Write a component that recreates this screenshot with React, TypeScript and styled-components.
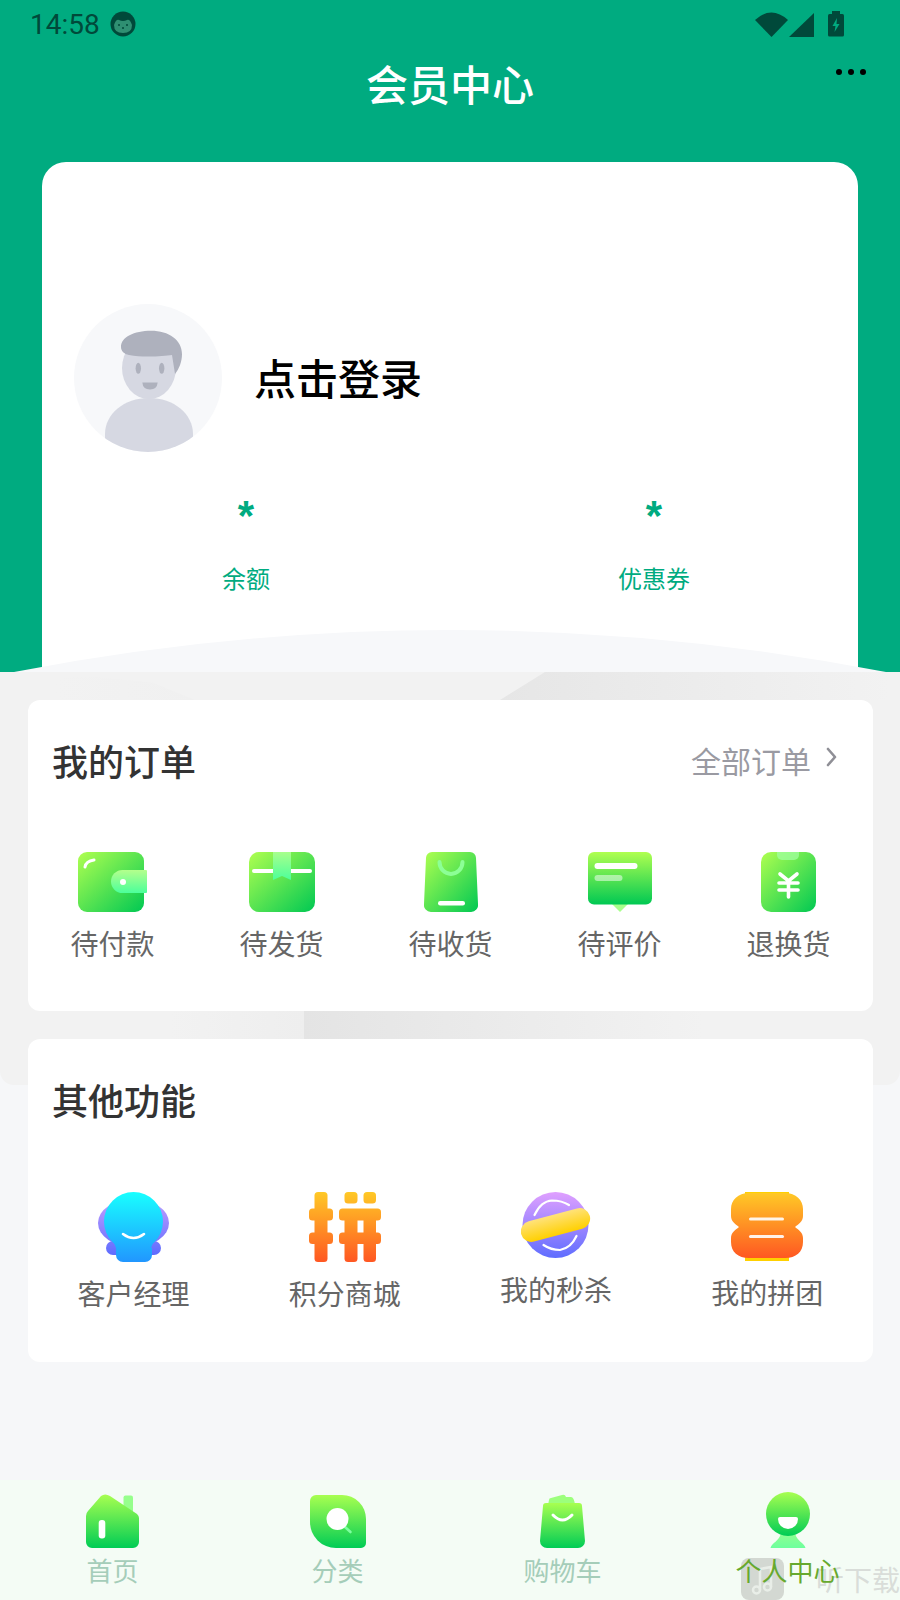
import * as React from 'react';
import styled, { createGlobalStyle } from 'styled-components';

const GlobalStyle = createGlobalStyle`
  html, body {
    margin: 0;
    padding: 0;
    background: #f6f7f9;
    font-family: "Noto Sans CJK SC", "Noto Sans", sans-serif;
  }
`;

const Page = styled.div`
  position: relative;
  width: 900px;
  height: 1600px;
  display: flex;
  flex-direction: column;
  overflow: hidden;
  background: #f6f7f9;
`;

const Header = styled.header`
  position: relative;
  height: 672px;
  flex: none;
  overflow: hidden;
  background: #00ab80;
`;

const StatusBar = styled.div`
  height: 48px;
  display: flex;
  align-items: center;
  padding: 0 56px 0 30px;
  color: #00493a;
  font-family: Roboto, sans-serif;
  font-size: 28px;
`;

const StatusTime = styled.span`
  margin-right: 10px;
`;

const StatusRight = styled.div`
  margin-left: auto;
  display: flex;
  align-items: center;
`;

const TitleRow = styled.div`
  height: 74px;
  display: grid;
  grid-template-columns: 1fr auto 1fr;
  align-items: center;
`;

const Title = styled.h1`
  grid-column: 2;
  margin: -4px 0 0;
  color: #fff;
  font-size: 42px;
  line-height: 74px;
  font-weight: 500;
`;

const MoreDots = styled.div`
  justify-self: end;
  align-self: start;
  margin: 21px 34px 0 0;
  display: flex;
  gap: 6px;
`;

const Dot = styled.span`
  width: 6px;
  height: 6px;
  border-radius: 50%;
  background: #000;
`;

const UserCard = styled.section`
  margin: 40px 42px 0;
  height: 600px;
  padding: 142px 32px 0;
  background: #fff;
  border-radius: 24px;
`;

const Profile = styled.div`
  display: flex;
  align-items: center;
  gap: 32px;
`;

const LoginText = styled.div`
  color: #000;
  font-size: 42px;
  font-weight: 500;
  line-height: 60px;
  margin-bottom: 2px;
`;

const Stats = styled.div`
  margin: 34px -32px 0;
  display: grid;
  grid-template-columns: 1fr 1fr;
`;

const Stat = styled.div`
  display: flex;
  flex-direction: column;
  align-items: center;
  color: #00ab80;
`;

const StatValue = styled.div`
  font-family: "Liberation Sans", sans-serif;
  font-size: 42px;
  font-weight: 700;
  line-height: 60px;
`;

const StatLabel = styled.div`
  margin-top: 15px;
  font-size: 24px;
  line-height: 34px;
`;

const Arc = styled.svg`
  position: absolute;
  left: 0;
  bottom: 0;
`;

const Main = styled.main`
  position: relative;
  flex: 1;
  padding: 28px 27px 0 28px;
  display: flex;
  flex-direction: column;
  gap: 28px;
`;

const Backdrop = styled.div`
  position: absolute;
  left: 0;
  right: 0;
  top: 0;
  height: 413px;
  background: #f2f2f2;
  border-radius: 0 0 14px 14px;
  overflow: hidden;
`;

const TopStreak = styled.div`
  position: absolute;
  left: 500px;
  top: 0;
  width: 390px;
  height: 28px;
  background: linear-gradient(90deg, #e6e6e6, #f2f2f2);
  clip-path: polygon(45px 0, 100% 0, 100% 100%, 0 100%);
`;

const TopShade = styled.div`
  position: absolute;
  left: 55px;
  top: 5px;
  width: 140px;
  height: 23px;
  background: linear-gradient(90deg, #f2f2f2, #f0f0f0);
  clip-path: polygon(0 0, 30% 0, 70% 25%, 100% 100%, 0 100%);
`;

const LowStreak = styled.div`
  position: absolute;
  left: 304px;
  top: 339px;
  width: 400px;
  height: 28px;
  background: linear-gradient(90deg, #e4e4e4, #f2f2f2);
`;

const LowShade = styled.div`
  position: absolute;
  left: 170px;
  top: 339px;
  width: 134px;
  height: 28px;
  background: linear-gradient(90deg, #f2f2f2, #eeeeee);
`;

const Card = styled.section<{ $height: number }>`
  position: relative;
  height: ${p => p.$height}px;
  background: #fff;
  border-radius: 12px;
`;

const CardHead = styled.div`
  height: 124px;
  padding: 0 36px 4px 24px;
  box-sizing: border-box;
  display: flex;
  align-items: center;
  justify-content: space-between;
`;

const CardTitle = styled.h2`
  margin: 0;
  color: #333;
  font-size: 36px;
  font-weight: 500;
`;

const AllOrders = styled.div`
  display: flex;
  align-items: center;
  gap: 15px;
  color: #9a9aa2;
  font-size: 30px;
  svg {
    margin-top: -6px;
  }
`;

const IconGrid = styled.div<{ $cols: number; $top: number }>`
  margin-top: ${p => p.$top}px;
  display: grid;
  grid-template-columns: repeat(${p => p.$cols}, 1fr);
  align-items: start;
`;

const GridItem = styled.div<{ $gap: number }>`
  display: flex;
  flex-direction: column;
  align-items: center;
  gap: ${p => p.$gap}px;
  svg {
    display: block;
  }
`;

const ItemLabel = styled.div`
  color: #666;
  font-size: 28px;
  line-height: 40px;
  white-space: nowrap;
`;

const BottomNav = styled.nav`
  height: 120px;
  flex: none;
  display: grid;
  grid-template-columns: repeat(4, 1fr);
  background: #f4fcf5;
`;

const NavItem = styled.div`
  display: flex;
  flex-direction: column;
  align-items: center;
  padding-top: 12px;
`;

const NavIcon = styled.div`
  height: 56px;
  display: flex;
  align-items: flex-end;
  margin-bottom: 4px;
`;

const NavLabel = styled.div<{ $active?: boolean }>`
  position: relative;
  z-index: 1;
  color: ${p => (p.$active ? '#67a92e' : '#a5cdb9')};
  font-size: 26px;
  line-height: 36px;
  white-space: nowrap;
`;

const Watermark = styled.div`
  position: absolute;
  left: 741px;
  bottom: 0;
  width: 170px;
  height: 42px;
  display: flex;
  align-items: center;
  gap: 32px;
  color: #d9ddd9;
  font-size: 28px;
  white-space: nowrap;
`;

const WatermarkBadge = styled.div`
  width: 43px;
  height: 42px;
  flex: none;
  display: flex;
  align-items: center;
  justify-content: center;
  background: #d3d8d2;
  border-radius: 8px;
`;

const Linear = ({ id, from, to, diag, user }: { id: string; from: string; to: string; diag?: boolean; user?: number }) =>
  user ? (
    <linearGradient id={id} gradientUnits="userSpaceOnUse" x1="0" y1="0" x2="0" y2={user}>
      <stop offset="0" stopColor={from} />
      <stop offset="1" stopColor={to} />
    </linearGradient>
  ) : (
    <linearGradient id={id} x1="0" y1="0" x2={diag ? 1 : 0} y2="1">
      <stop offset="0" stopColor={from} />
      <stop offset="1" stopColor={to} />
    </linearGradient>
  );

const GREEN_TOP = '#b0ff50';
const GREEN_END = '#00c853';

const WalletIcon = () => (
  <svg width="70" height="60" viewBox="0 0 70 60">
    <defs>
      <Linear id="wal" from={GREEN_TOP} to={GREEN_END} diag />
      <Linear id="walf" from="#b4ff8c" to="#4bff9b" />
    </defs>
    <rect width="66" height="60" rx="9" fill="url(#wal)" />
    <path d="M68 18H44.500a11.500 11.500 0 0 0 0 23H68a1 1 0 0 0 1-1V19a1 1 0 0 0-1-1Z" fill="url(#walf)" />
    <circle cx="45" cy="30" r="3" fill="#fff" />
    <path d="M7 15Q8 9 16 8" fill="none" stroke="#fff" strokeWidth="3" strokeLinecap="round" />
  </svg>
);

const BoxIcon = () => (
  <svg width="66" height="60" viewBox="0 0 66 60">
    <defs>
      <Linear id="box" from={GREEN_TOP} to={GREEN_END} diag />
      <Linear id="boxr" from="#a8ff8c" to="#4dff9a" />
    </defs>
    <rect width="66" height="60" rx="10" fill="url(#box)" />
    <rect x="3" y="17" width="60" height="4" rx="2" fill="#fff" />
    <path d="M24 0H42V28L33 24L24 28Z" fill="url(#boxr)" />
  </svg>
);

const BagIcon = () => (
  <svg width="54" height="60" viewBox="0 0 54 60">
    <defs>
      <Linear id="bag" from={GREEN_TOP} to={GREEN_END} diag />
    </defs>
    <path d="M8 0H46a6 6 0 0 1 6 6L54 52a7 7 0 0 1-7 8H7a7 7 0 0 1-7-8L2 6a6 6 0 0 1 6-6Z" fill="url(#bag)" />
    <path d="M15.500 10a11.500 12 0 0 0 23 0" fill="none" stroke="#8cff96" strokeWidth="4" strokeLinecap="round" />
    <rect x="14" y="49" width="27" height="4.500" rx="2.200" fill="#fff" />
  </svg>
);

const MessageIcon = () => (
  <svg width="64" height="60" viewBox="0 0 64 60">
    <defs>
      <Linear id="msg" from={GREEN_TOP} to={GREEN_END} />
    </defs>
    <path d="M24 52L32 60L40 52Z" fill="#a8ff8c" />
    <rect width="64" height="52.500" rx="6" fill="url(#msg)" />
    <rect x="6.500" y="11" width="43" height="6" rx="3" fill="#fff" />
    <rect x="6.500" y="23" width="28" height="6" rx="3" fill="#fff" opacity="0.5" />
  </svg>
);

const YenIcon = () => (
  <svg width="55" height="60" viewBox="0 0 55 60">
    <defs>
      <Linear id="yen" from={GREEN_TOP} to={GREEN_END} diag />
    </defs>
    <rect width="55" height="60" rx="10" fill="url(#yen)" />
    <path d="M16 0H38V3a5 5 0 0 1-5 5H21a5 5 0 0 1-5-5Z" fill="#a0ffa0" opacity="0.75" />
    <path d="M19 22L27.500 29L36 22M18 31H37M18 38H37M27.500 29V45" fill="none" stroke="#fff" strokeWidth="3.600" strokeLinecap="round" />
  </svg>
);

const ManagerIcon = () => (
  <svg width="71" height="70" viewBox="0 0 71 70">
    <defs>
      <Linear id="mgrp" from="#d0a4ff" to="#5f6dff" user={62} />
      <Linear id="mgrb" from="#18ffff" to="#2196ff" user={70} />
    </defs>
    <ellipse cx="35.500" cy="31" rx="35.500" ry="24" fill="url(#mgrp)" />
    <rect x="8" y="49" width="55" height="14" rx="7" fill="url(#mgrp)" />
    <circle cx="35.500" cy="29.500" r="29.500" fill="url(#mgrb)" />
    <path d="M14 46H57L53 56H54V63a7 7 0 0 1-7 7H25a7 7 0 0 1-7-7V56H18Z" fill="url(#mgrb)" />
    <path d="M25 42Q35.500 50 46 42" fill="none" stroke="#fff" strokeWidth="2.600" strokeLinecap="round" />
  </svg>
);

const PinIcon = () => (
  <svg width="72" height="70" viewBox="0 0 72 70">
    <defs>
      <Linear id="pin" from="#ffc926" to="#ff5722" user={70} />
    </defs>
    <g fill="url(#pin)">
      <rect x="5.500" width="13" height="70" rx="3.500" />
      <rect y="16.500" width="24" height="12" rx="3.500" />
      <rect y="40.500" width="24" height="11.500" rx="3.500" />
      <rect x="35.500" width="13" height="11.500" rx="3.500" />
      <rect x="54.500" width="12.500" height="11.500" rx="3.500" />
      <rect x="30" y="16.500" width="42" height="12" rx="3.500" />
      <rect x="30" y="40.500" width="42" height="11.500" rx="3.500" />
      <rect x="35.500" y="17" width="13" height="53" rx="3.500" />
      <rect x="54.500" y="17" width="12.500" height="53" rx="3.500" />
    </g>
  </svg>
);

const PlanetIcon = () => (
  <svg width="70" height="66" viewBox="0 0 70 66">
    <defs>
      <Linear id="pla" from="#e0a0ff" to="#5f6dff" />
      <Linear id="plab" from="#ffe27a" to="#ffd000" />
    </defs>
    <circle cx="34.500" cy="33" r="33" fill="url(#pla)" />
    <path d="M13.500 23Q20 9 31 8.500Q41 8.500 48 13" fill="none" stroke="#fff" strokeWidth="2.200" strokeLinecap="round" />
    <path d="M22.500 53Q30 58 39 58Q50 56 55.500 44" fill="none" stroke="#fff" strokeWidth="2.200" strokeLinecap="round" />
    <rect x="-1" y="22.500" width="71" height="21" rx="10.500" fill="url(#plab)" transform="rotate(-15 34.500 33)" />
  </svg>
);

const GroupIcon = () => (
  <svg width="72" height="69" viewBox="0 0 72 69">
    <defs>
      <Linear id="grp" from="#ffc926" to="#ff5722" />
    </defs>
    <rect x="14" y="0" width="44" height="6" fill="#ffd000" />
    <rect x="14" y="62" width="44" height="7" fill="#ffd000" />
    <path
      d="M18 1H54C65 1 72 8 72 17V24C72 29 68 32 64 35C68 38 72 41 72 46V50C72 60 65 66 54 66H18C7 66 0 60 0 50V46C0 41 4 38 8 35C4 32 0 29 0 24V17C0 8 7 1 18 1Z"
      fill="url(#grp)"
    />
    <rect x="18" y="25.500" width="35" height="3" rx="1.500" fill="#fff" opacity="0.9" />
    <rect x="18" y="43" width="35" height="3" rx="1.500" fill="#fff" opacity="0.9" />
  </svg>
);

const HomeIcon = () => (
  <svg width="53" height="54" viewBox="0 0 53 54">
    <defs>
      <Linear id="hom" from="#a8ff50" to="#00cc55" />
    </defs>
    <rect x="37.500" y="1.500" width="9.500" height="24" rx="2" fill="#96ff8c" />
    <path d="M15 2Q19-1 24 2L51 20Q53 22 53 24V48a6 6 0 0 1-6 6H6a6 6 0 0 1-6-6V22Q0 19 2 17Z" fill="url(#hom)" />
    <rect x="12.700" y="26" width="6.600" height="18.500" rx="3" fill="#fff" />
  </svg>
);

const SearchIcon = () => (
  <svg width="56" height="53" viewBox="0 0 56 53">
    <defs>
      <Linear id="sea" from="#a8ff50" to="#00cc55" />
    </defs>
    <path d="M6 0H32A24 24 0 0 1 56 24V48a5 5 0 0 1-5 5H26A26 26 0 0 1 0 27V6a6 6 0 0 1 6-6Z" fill="url(#sea)" />
    <path d="M35 32L40.500 37" stroke="#7dffa0" strokeWidth="2.600" strokeLinecap="round" />
    <circle cx="27.500" cy="24" r="11" fill="#fff" />
  </svg>
);

const CartIcon = () => (
  <svg width="45" height="54" viewBox="0 0 45 54">
    <defs>
      <Linear id="car" from="#a8ff50" to="#00cc55" />
    </defs>
    <path d="M8 11L9 6Q9 4 11 4L22 1Q25 0 26 3L31 3Q34 3 35 11Z" fill="#9cff7c" />
    <path d="M6 9H39a3 3 0 0 1 3 3L45 47a7 7 0 0 1-7 7H7a7 7 0 0 1-7-7L3 12a3 3 0 0 1 3-3Z" fill="url(#car)" />
    <path d="M13 21Q22.500 31 32 21" fill="none" stroke="#fff" strokeWidth="3" strokeLinecap="round" />
  </svg>
);

const PersonIcon = () => (
  <svg width="44" height="56" viewBox="0 0 44 56">
    <defs>
      <Linear id="per" from="#a8ff50" to="#00cc55" />
      <Linear id="perb" from="#90ff90" to="#6dff9d" />
    </defs>
    <path d="M15 41H29C31 50 38 50 39.500 56H4.500C6 50 13 50 15 41Z" fill="url(#perb)" />
    <circle cx="22" cy="22" r="22" fill="url(#per)" />
    <path d="M14 25H30a2 2 0 0 1 2 2a10 10 0 0 1-20 0a2 2 0 0 1 2-2Z" fill="#fff" />
  </svg>
);

const Avatar = () => (
  <svg width="148" height="148" viewBox="0 0 148 148">
    <defs>
      <clipPath id="avatarClip">
        <circle cx="74" cy="74" r="74" />
      </clipPath>
    </defs>
    <circle cx="74" cy="74" r="74" fill="#f7f8fa" />
    <g clipPath="url(#avatarClip)">
      <path d="M31 148V130C31 110 50 94 75 94C100 94 119 110 119 130V148Z" fill="#d6d8e2" />
      <ellipse cx="75" cy="64" rx="27" ry="31" fill="#d6d8e2" />
      <path d="M47 43C47 33 60 26.700 77 26.700C95 26.700 108 36 108 50C108 58 105 65 101 70L98 51C90 52 70 54 55 51C50 50 47 47 47 43Z" fill="#aeb1bd" />
      <ellipse cx="64.300" cy="64.300" rx="2.700" ry="5.500" fill="#aeb1bd" />
      <ellipse cx="87.700" cy="64.300" rx="2.700" ry="5.500" fill="#aeb1bd" />
      <path d="M68.300 78.500H83.700Q83 85.500 76 85.500Q69 85.500 68.300 78.500Z" fill="#aeb1bd" />
    </g>
  </svg>
);

const FaceIcon = () => (
  <svg width="26" height="26" viewBox="0 0 26 26">
    <circle cx="13" cy="13" r="12.500" fill="#00493a" />
    <path d="M4 14Q6 8 9 9Q13 11 17 9Q20 8 22 14Q22 22 13 22Q4 22 4 14Z" fill="#2f8f72" />
    <g fill="#00493a">
      <circle cx="9" cy="14" r="1" />
      <circle cx="17" cy="14" r="1" />
      <circle cx="13" cy="17" r="1" />
    </g>
  </svg>
);

const StatusIcons = () => (
  <svg width="89" height="26" viewBox="-2 0 89 26" fill="#00493a">
    <path d="M-2 9Q14.500-6 31 9L14.500 26Z" />
    <path d="M57 2V26H32Z" />
    <rect x="71" y="3" width="16" height="22.500" rx="1.500" />
    <rect x="75" y="0" width="8" height="4" />
    <path d="M80 7L75.500 15H78.500L77.500 21L82.500 13H79.500Z" fill="#00ab80" />
  </svg>
);

const Chevron = () => (
  <svg width="11" height="20" viewBox="0 0 11 20" fill="none" stroke="#8f8f96" strokeWidth="2.600" strokeLinecap="round" strokeLinejoin="round">
    <path d="M2 2L9 10L2 18" />
  </svg>
);

const orders = [
  { label: '待付款', icon: <WalletIcon /> },
  { label: '待发货', icon: <BoxIcon /> },
  { label: '待收货', icon: <BagIcon /> },
  { label: '待评价', icon: <MessageIcon /> },
  { label: '退换货', icon: <YenIcon /> },
];

const others = [
  { label: '客户经理', icon: <ManagerIcon /> },
  { label: '积分商城', icon: <PinIcon /> },
  { label: '我的秒杀', icon: <PlanetIcon /> },
  { label: '我的拼团', icon: <GroupIcon /> },
];

const tabs = [
  { label: '首页', icon: <HomeIcon /> },
  { label: '分类', icon: <SearchIcon /> },
  { label: '购物车', icon: <CartIcon /> },
  { label: '个人中心', icon: <PersonIcon />, active: true },
];

export default function App() {
  return (
    <Page>
      <GlobalStyle />
      <Header>
        <StatusBar>
          <StatusTime>14:58</StatusTime>
          <FaceIcon />
          <StatusRight>
            <StatusIcons />
          </StatusRight>
        </StatusBar>
        <TitleRow>
          <Title>会员中心</Title>
          <MoreDots>
            <Dot />
            <Dot />
            <Dot />
          </MoreDots>
        </TitleRow>
        <UserCard>
          <Profile>
            <Avatar />
            <LoginText>点击登录</LoginText>
          </Profile>
          <Stats>
            <Stat>
              <StatValue>*</StatValue>
              <StatLabel>余额</StatLabel>
            </Stat>
            <Stat>
              <StatValue>*</StatValue>
              <StatLabel>优惠券</StatLabel>
            </Stat>
          </Stats>
        </UserCard>
        <Arc width="900" height="42" viewBox="0 0 900 42">
          <path d="M14 42Q450-42 886 42Z" fill="#f7f8fa" />
        </Arc>
      </Header>
      <Main>
        <Backdrop>
          <TopShade />
          <TopStreak />
          <LowShade />
          <LowStreak />
        </Backdrop>
        <Card $height={311}>
          <CardHead>
            <CardTitle>我的订单</CardTitle>
            <AllOrders>
              全部订单
              <Chevron />
            </AllOrders>
          </CardHead>
          <IconGrid $cols={5} $top={28}>
            {orders.map(o => (
              <GridItem key={o.label} $gap={11}>
                {o.icon}
                <ItemLabel>{o.label}</ItemLabel>
              </GridItem>
            ))}
          </IconGrid>
        </Card>
        <Card $height={323}>
          <CardHead>
            <CardTitle>其他功能</CardTitle>
          </CardHead>
          <IconGrid $cols={4} $top={29}>
            {others.map(o => (
              <GridItem key={o.label} $gap={11}>
                {o.icon}
                <ItemLabel>{o.label}</ItemLabel>
              </GridItem>
            ))}
          </IconGrid>
        </Card>
      </Main>
      <BottomNav>
        {tabs.map(t => (
          <NavItem key={t.label}>
            <NavIcon>{t.icon}</NavIcon>
            <NavLabel $active={t.active}>{t.label}</NavLabel>
          </NavItem>
        ))}
      </BottomNav>
      <Watermark>
        <WatermarkBadge>
          <svg width="24" height="32" viewBox="0 0 24 32" fill="none" stroke="#e9eee8" strokeWidth="2.500">
            <path d="M9 27V6L20 4V24" />
            <circle cx="5.500" cy="27" r="3.500" />
            <circle cx="16.500" cy="24" r="3.500" />
          </svg>
        </WatermarkBadge>
        听下载
      </Watermark>
    </Page>
  );
}
